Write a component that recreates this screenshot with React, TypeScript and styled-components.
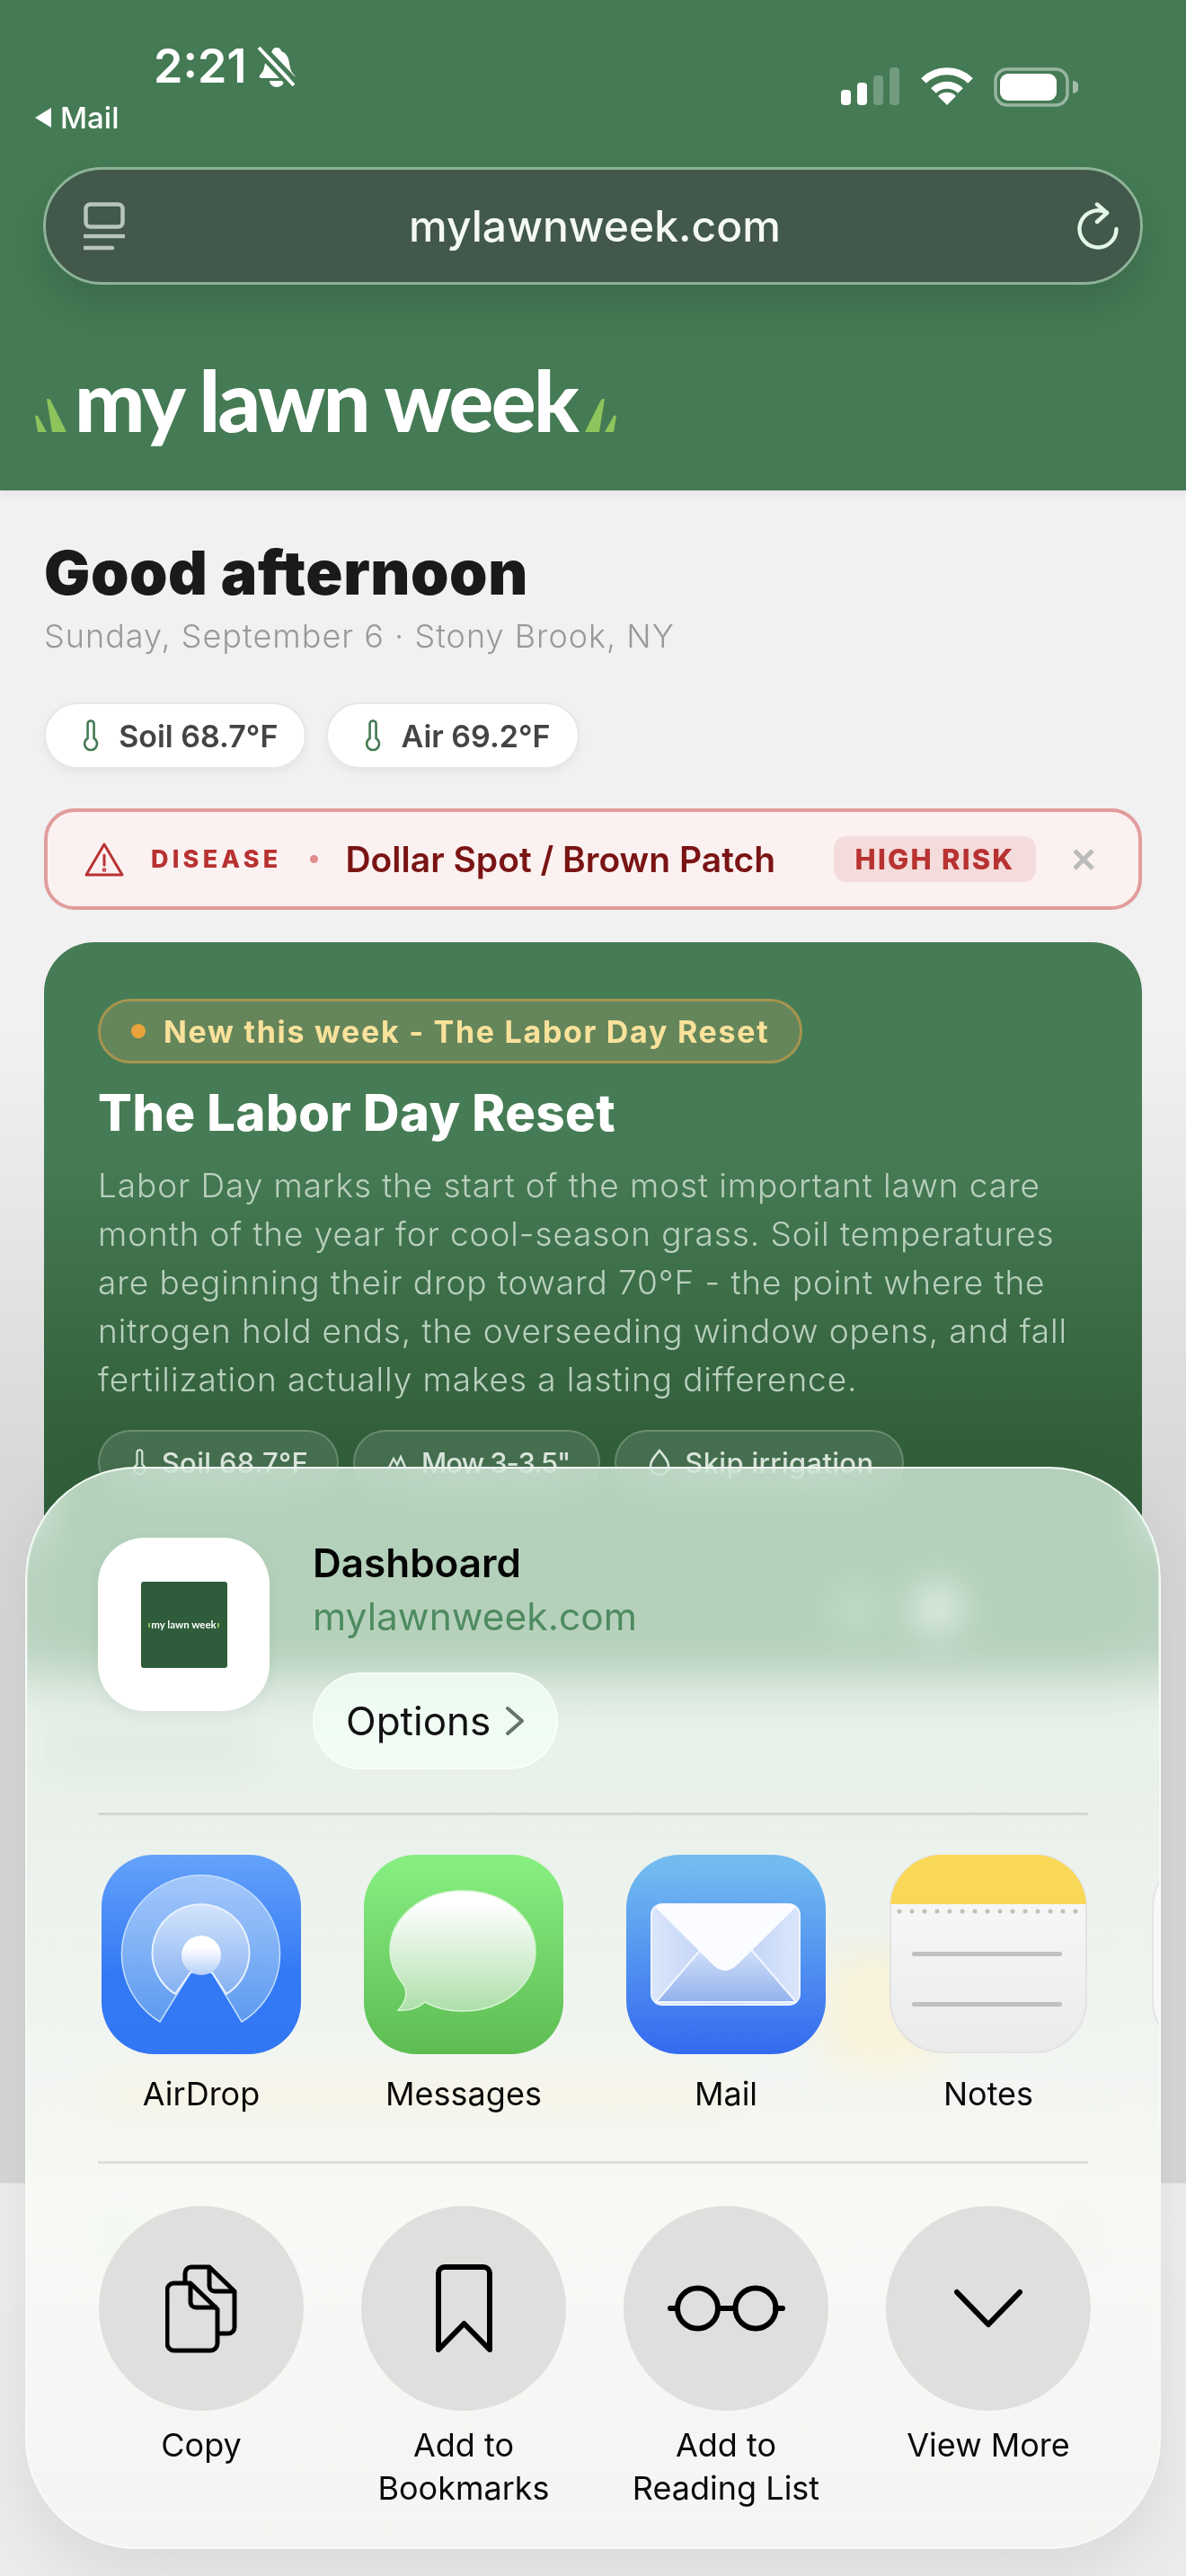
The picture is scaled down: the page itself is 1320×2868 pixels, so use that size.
import React from 'react';
import styled, { createGlobalStyle } from 'styled-components';

const GlobalStyle = createGlobalStyle`
  html, body { margin: 0; padding: 0; background: #e8e8e8; }
  * { box-sizing: border-box; }
`;

const sans = `Inter, "Liberation Sans", sans-serif`;

const apps = ['AirDrop', 'Messages', 'Mail', 'Notes'];

const AirDropIcon = () => (
  <svg width="222" height="222" viewBox="0 0 222 222">
    <defs>
      <linearGradient id="adBg" x1="0" y1="0" x2="0" y2="1">
        <stop offset="0" stopColor="#64a2fa" />
        <stop offset="0.6" stopColor="#3379f5" />
        <stop offset="1" stopColor="#3276f3" />
      </linearGradient>
      <linearGradient id="adOuter" x1="0" y1="0" x2="0" y2="1">
        <stop offset="0" stopColor="#a4c8fb" />
        <stop offset="1" stopColor="#5c9af0" />
      </linearGradient>
      <linearGradient id="adInner" x1="0" y1="0" x2="0" y2="1">
        <stop offset="0" stopColor="#d4e4fb" />
        <stop offset="1" stopColor="#84b0f2" />
      </linearGradient>
      <linearGradient id="adDot" x1="0" y1="0" x2="0" y2="1">
        <stop offset="0.3" stopColor="#ffffff" />
        <stop offset="1" stopColor="#b5cff8" />
      </linearGradient>
    </defs>
    <rect width="222" height="222" rx="58" fill="url(#adBg)" />
    <path d="M65 186 A88 88 0 1 1 156 186 L123 131 L99 131 Z" fill="url(#adOuter)" stroke="#c4defd" strokeWidth="1.5" strokeLinejoin="round" />
    <path d="M82 155 A54 54 0 1 1 139 155 L123 131 L99 131 Z" fill="url(#adInner)" stroke="#e8f2ff" strokeWidth="2" strokeLinejoin="round" />
    <circle cx="111" cy="112" r="22" fill="url(#adDot)" />
  </svg>
);

const MessagesIcon = () => (
  <svg width="222" height="222" viewBox="0 0 222 222">
    <defs>
      <linearGradient id="msgBg" x1="0" y1="0" x2="0" y2="1">
        <stop offset="0" stopColor="#88f082" />
        <stop offset="1" stopColor="#5dbc52" />
      </linearGradient>
      <linearGradient id="msgBubble" x1="0" y1="0" x2="0" y2="1">
        <stop offset="0.1" stopColor="#ffffff" />
        <stop offset="1" stopColor="#aedfaa" />
      </linearGradient>
    </defs>
    <rect width="222" height="222" rx="58" fill="url(#msgBg)" />
    <path
      d="M110 40 C156 40 191 70 191 107 C191 144 156 174 110 174 C94 174 80 171 68 164 C60 171 50 174 38 173 C46 165 49 155 45 146 C36 134 29 122 29 107 C29 70 64 40 110 40 Z"
      fill="url(#msgBubble)"
      stroke="#d6f5d2"
      strokeWidth="1.5"
    />
  </svg>
);

const MailIcon = () => (
  <svg width="222" height="222" viewBox="0 0 222 222">
    <defs>
      <linearGradient id="mailBg" x1="0" y1="0" x2="0" y2="1">
        <stop offset="0.05" stopColor="#72bbf0" />
        <stop offset="1" stopColor="#336af0" />
      </linearGradient>
      <linearGradient id="mailBody" x1="0" y1="0" x2="1" y2="0">
        <stop offset="0" stopColor="#dbe6fb" />
        <stop offset="0.5" stopColor="#b8cdf3" />
        <stop offset="1" stopColor="#dbe6fb" />
      </linearGradient>
      <linearGradient id="mailLower" x1="0" y1="0" x2="0" y2="1">
        <stop offset="0" stopColor="#d4e1f9" />
        <stop offset="1" stopColor="#93b2ec" />
      </linearGradient>
    </defs>
    <rect width="222" height="222" rx="60" fill="url(#mailBg)" />
    <rect x="28" y="55" width="165" height="112" rx="12" fill="url(#mailBody)" stroke="#eef4ff" strokeWidth="2" />
    <path d="M33 164 L85 103 L137 103 L189 164 Z" fill="url(#mailLower)" stroke="#f2f7ff" strokeWidth="2" strokeLinejoin="round" />
    <path d="M32 58 L96 122 Q110 136 124 122 L189 58 Q186 55 180 55 L40 55 Q35 55 32 58 Z" fill="#fbfcff" />
  </svg>
);

const NotesIcon = () => (
  <svg width="220" height="222" viewBox="0 0 220 222">
    <defs>
      <linearGradient id="notesPaper" x1="0" y1="0" x2="0" y2="1">
        <stop offset="0" stopColor="#fafafa" />
        <stop offset="1" stopColor="#ebebeb" />
      </linearGradient>
      <clipPath id="notesClip">
        <rect x="1" y="0" width="218" height="220" rx="58" />
      </clipPath>
    </defs>
    <rect x="1" y="0" width="218" height="220" rx="58" fill="url(#notesPaper)" stroke="#e2e2e2" strokeWidth="2" />
    <rect x="0" y="0" width="220" height="55" fill="#f9d857" clipPath="url(#notesClip)" />
    <g fill="#c4c2b4">
      {Array.from({ length: 15 }).map((_, i) => (
        <circle key={i} cx={11 + i * 14} cy="63" r="2.5" />
      ))}
    </g>
    <rect x="25" y="108" width="167" height="5" rx="2.5" fill="#c0c0c0" />
    <rect x="25" y="164" width="167" height="5" rx="2.5" fill="#c0c0c0" />
  </svg>
);

const appIcons = [<AirDropIcon key="a" />, <MessagesIcon key="m" />, <MailIcon key="e" />, <NotesIcon key="n" />];

const Thermometer = ({ size = 36, color = '#447a54' }: { size?: number; color?: string }) => (
  <svg width={size * 0.56} height={size} viewBox="0 0 20 36" fill="none" stroke={color} strokeWidth="2.6">
    <path d="M6.5 21 V5 a3.5 3.5 0 0 1 7 0 V21 a7 7 0 1 1 -7 0 Z" />
  </svg>
);

const Blades = ({ flip }: { flip?: boolean }) => (
  <svg width="38" height="37" viewBox="0 0 38 37" fill="#8fc45c">
    {flip ? (
      <>
        <path d="M37 19 Q35 18 34 19 L24 37 H34 Z" />
        <path d="M24 0 Q21 0 20 1 L2 37 H18 Z" />
      </>
    ) : (
      <>
        <path d="M1 19 Q3 18 4 19 L14 37 H4 Z" />
        <path d="M14 0 Q17 0 18 1 L36 37 H20 Z" />
      </>
    )}
  </svg>
);

export default function App() {
  return (
    <Screen>
      <GlobalStyle />
      <Header>
        <StatusBar>
          <StatusLeft>
            <TimeRow>
              <Time>2:21</Time>
              <svg width="44" height="46" viewBox="0 0 44 46" fill="#fff">
                <path d="M22 2 c3 0 5 2 5 4 c6 2 8 7 9 13 c1 7 2 10 6 14 c1 1 0 3-2 3 H5 c-2 0-3-2-2-3 c4-4 5-7 6-14 c1-6 4-11 8-13 c0-2 2-4 5-4 Z" />
                <path d="M14 39 h16 a8 7 0 0 1-16 0 Z" />
                <path d="M6 0 L44 40" stroke="#447a54" strokeWidth="5" />
                <path d="M0 4 L40 46" stroke="#447a54" strokeWidth="8" />
                <path d="M2 2 L41 44" stroke="#fff" strokeWidth="4" />
              </svg>
            </TimeRow>
            <BackLink>
              <svg width="20" height="24" viewBox="0 0 20 24" fill="#fff">
                <path d="M19 1 V23 L1 12 Z" />
              </svg>
              Mail
            </BackLink>
          </StatusLeft>
          <StatusRight>
            <svg width="66" height="42" viewBox="0 0 66 42">
              <rect x="0" y="25" width="11" height="17" rx="4" fill="#fff" />
              <rect x="18" y="17" width="11" height="25" rx="4" fill="#fff" />
              <rect x="36" y="9" width="11" height="33" rx="4" fill="#fff" fillOpacity=".25" />
              <rect x="54" y="0" width="11" height="42" rx="4" fill="#fff" fillOpacity=".25" />
            </svg>
            <svg width="58" height="42" viewBox="0 0 58 42" fill="none" stroke="#fff" strokeWidth="8">
              <path d="M3 15 A37 37 0 0 1 55 15" />
              <path d="M14 26 A21 21 0 0 1 44 26" />
              <path d="M29 42 L19 32 A14 14 0 0 1 39 32 Z" fill="#fff" stroke="none" />
            </svg>
            <svg width="94" height="44" viewBox="0 0 94 44">
              <rect x="2" y="2" width="80" height="40" rx="13" fill="none" stroke="#fff" strokeOpacity=".45" strokeWidth="3.5" />
              <rect x="7" y="7" width="63" height="30" rx="9" fill="#fff" />
              <path d="M88 15 a7 7 0 0 1 0 14 Z" fill="#fff" fillOpacity=".5" />
            </svg>
          </StatusRight>
        </StatusBar>
        <UrlBar>
          <svg width="46" height="54" viewBox="0 0 46 54" fill="none" stroke="#b7c5ba" strokeWidth="4.5">
            <rect x="2.5" y="2.5" width="41" height="25" rx="5" />
            <path d="M1 38 H45" strokeLinecap="round" />
            <path d="M1 51 H32" strokeLinecap="round" />
          </svg>
          <UrlText>mylawnweek.com</UrlText>
          <svg width="48" height="54" viewBox="0 0 48 54" fill="none" stroke="#e3f7e8" strokeWidth="4.4" strokeLinecap="round" strokeLinejoin="round">
            <path d="M43.5 30 A20.5 20.5 0 1 1 33 12" />
            <path d="M22 2.5 L33 12 L22 22" />
          </svg>
        </UrlBar>
        <LogoRow>
          <Blades />
          <LogoText>my lawn week</LogoText>
          <Blades flip />
        </LogoRow>
      </Header>

      <SheetBacking />
      <Content>
        <Greeting>Good afternoon</Greeting>
        <DateLine>Sunday, September 6 · Stony Brook, NY</DateLine>
        <ChipRow>
          <Chip>
            <Thermometer />
            Soil 68.7°F
          </Chip>
          <Chip>
            <Thermometer />
            Air 69.2°F
          </Chip>
        </ChipRow>
        <Alert>
          <svg width="44" height="38" viewBox="0 0 44 38" fill="none" stroke="#b83232" strokeWidth="3" strokeLinejoin="round">
            <path d="M22 2 L42 36 H2 Z" />
            <path d="M22 14 V25" strokeLinecap="round" />
            <circle cx="22" cy="30.5" r="0.8" />
          </svg>
          <AlertKind>DISEASE</AlertKind>
          <AlertDot />
          <AlertTitle>Dollar Spot / Brown Patch</AlertTitle>
          <RiskBadge>HIGH RISK</RiskBadge>
          <CloseMark>
            <svg width="24" height="24" viewBox="0 0 24 24" stroke="#bbb" strokeWidth="5">
              <path d="M2 2 L22 22 M22 2 L2 22" />
            </svg>
          </CloseMark>
        </Alert>
        <Card>
          <NewBadge>
            <BadgeDot />
            New this week - The Labor Day Reset
          </NewBadge>
          <CardTitle>The Labor Day Reset</CardTitle>
          <CardText>
            Labor Day marks the start of the most important lawn care
            <br />
            month of the year for cool-season grass. Soil temperatures
            <br />
            are beginning their drop toward 70°F - the point where the
            <br />
            nitrogen hold ends, the overseeding window opens, and fall
            <br />
            fertilization actually makes a lasting difference.
          </CardText>
          <CardChips>
            <CardChip>
              <Thermometer size={30} color="#dce8de" />
              Soil 68.7°F
            </CardChip>
            <CardChip $tight>
              <svg width="22" height="18" viewBox="0 0 22 18" fill="none" stroke="#dce8de" strokeWidth="2.4">
                <path d="M1 17 L7 5 L11 12 L15 3 L21 17" />
              </svg>
              Mow 3-3.5"
            </CardChip>
            <CardChip>
              <svg width="24" height="30" viewBox="0 0 24 30" fill="none" stroke="#dce8de" strokeWidth="2.6">
                <path d="M12 2 C18 9 22 14 22 19 a10 10 0 0 1-20 0 C2 14 6 9 12 2 Z" />
              </svg>
              Skip irrigation
            </CardChip>
          </CardChips>
          <Pager>
            <PagerDot $tone="#7fc08a" />
            <PagerDot $tone="#ffffff" />
          </Pager>
        </Card>
        <BlurredTitle />
        <WarmCard />
        <WarmStripe />
      </Content>

      <BottomBar>
        <GreenSpot />
        <DarkSpot />
      </BottomBar>

      <Sheet>
        <ShareHead>
          <Thumb>
            <ThumbInner>
              <ThumbBlade />
              <ThumbLogo>my lawn week</ThumbLogo>
              <ThumbBlade />
            </ThumbInner>
          </Thumb>
          <ShareInfo>
            <PageTitle>Dashboard</PageTitle>
            <PageUrl>mylawnweek.com</PageUrl>
            <OptionsButton>
              Options
              <svg width="22" height="34" viewBox="0 0 22 34" fill="none" stroke="#66736a" strokeWidth="4" strokeLinecap="round" strokeLinejoin="round">
                <path d="M3 3 L19 17 L3 31" />
              </svg>
            </OptionsButton>
          </ShareInfo>
        </ShareHead>
        <Divider />
        <AppRow>
          {apps.map((name, i) => (
            <AppCell key={name}>
              {appIcons[i]}
              <AppLabel>{name}</AppLabel>
            </AppCell>
          ))}
          <AppCell>
            <NextIcon />
          </AppCell>
        </AppRow>
        <Divider />
        <ActionRow>
          <ActionCell>
            <ActionCircle>
              <svg width="80" height="99" viewBox="0 0 80 99" fill="none" stroke="#000" strokeWidth="5" strokeLinejoin="round">
                <path d="M22 20 V10 a7 7 0 0 1 7-7 H49 L77 30 V70 a7 7 0 0 1-7 7 H60" />
                <path d="M49 3 V24 a6 6 0 0 0 6 6 H77" />
                <path d="M9 21 H28 L58 50 V88 a8 8 0 0 1-8 8 H10 a8 8 0 0 1-8-8 V29 a8 8 0 0 1 7-8 Z" />
                <path d="M28 21 V42 a6 6 0 0 0 6 6 H58" />
              </svg>
            </ActionCircle>
            <ActionLabel>Copy</ActionLabel>
          </ActionCell>
          <ActionCell>
            <ActionCircle>
              <svg width="63" height="98" viewBox="0 0 63 98" fill="none" stroke="#000" strokeWidth="6" strokeLinejoin="round">
                <path d="M3 95 V10 a7 7 0 0 1 7-7 H53 a7 7 0 0 1 7 7 V95 L31.5 66 Z" />
              </svg>
            </ActionCircle>
            <ActionLabel>
              Add to
              <br />
              Bookmarks
            </ActionLabel>
          </ActionCell>
          <ActionCell>
            <ActionCircle>
              <svg width="131" height="52" viewBox="0 0 131 52" fill="none" stroke="#000" strokeWidth="6" strokeLinecap="round">
                <circle cx="33.5" cy="26" r="22.5" />
                <circle cx="98" cy="26" r="22.5" />
                <path d="M56 26 H75 M3 26 H11 M120 26 H128" />
              </svg>
            </ActionCircle>
            <ActionLabel>
              Add to
              <br />
              Reading List
            </ActionLabel>
          </ActionCell>
          <ActionCell>
            <ActionCircle>
              <svg width="76" height="44" viewBox="0 0 76 44" fill="none" stroke="#000" strokeWidth="6" strokeLinecap="round" strokeLinejoin="round">
                <path d="M3 4 L38 40 L73 4" />
              </svg>
            </ActionCircle>
            <ActionLabel>View More</ActionLabel>
          </ActionCell>
        </ActionRow>
      </Sheet>
    </Screen>
  );
}

const Screen = styled.div`
  position: relative;
  width: 1320px;
  height: 2868px;
  overflow: hidden;
  font-family: ${sans};
  background: linear-gradient(#f1f1f1 0, #f1f1f1 1150px, #d8d8d8 1640px, #d8d8d8 100%);
`;

const Header = styled.header`
  height: 546px;
  background: #447a54;
  box-shadow: 0 2px 10px rgba(0, 0, 0, 0.08);
`;

const StatusBar = styled.div`
  display: flex;
  justify-content: space-between;
  height: 186px;
  padding: 46px 120px 0 38px;
  color: #fff;
`;

const StatusLeft = styled.div`
  display: flex;
  flex-direction: column;
`;

const TimeRow = styled.div`
  display: flex;
  align-items: center;
  gap: 12px;
  margin-left: 133px;
`;

const Time = styled.span`
  font-size: 52px;
  line-height: 56px;
  font-weight: 600;
`;

const BackLink = styled.div`
  display: flex;
  align-items: center;
  gap: 9px;
  margin-top: 10px;
  font-size: 33px;
  line-height: 38px;
  font-weight: 500;
`;

const StatusRight = styled.div`
  display: flex;
  align-items: flex-start;
  gap: 23px;
  padding-top: 29px;
`;

const UrlBar = styled.div`
  display: flex;
  align-items: center;
  justify-content: space-between;
  height: 131px;
  margin: 0 48px 0 48px;
  padding: 0 22px 0 42px;
  border-radius: 66px;
  background: #41584a;
  border: 3px solid #8db398;
  box-shadow: 0 22px 44px rgba(0, 0, 0, 0.12);
`;

const UrlText = styled.span`
  margin-right: 14px;
  font-size: 48px;
  font-weight: 500;
  color: #f5f9f6;
`;

const LogoRow = styled.div`
  display: flex;
  align-items: baseline;
  margin: 78px 0 0 38px;
`;

const LogoText = styled.span`
  font-family: Lato, sans-serif;
  font-size: 93px;
  line-height: 100px;
  font-weight: 900;
  color: #fff;
  margin: 0 7px;
  letter-spacing: -2.6px;
`;

const Content = styled.main`
  position: relative;
  padding: 52px 49px 0;
`;

const Greeting = styled.h1`
  margin: 0;
  font-size: 68px;
  line-height: 78px;
  font-weight: 900;
  letter-spacing: 0.6px;
  color: #1a1a1a;
`;

const DateLine = styled.p`
  margin: 10px 0 0;
  font-size: 36px;
  line-height: 44px;
  font-weight: 300;
  letter-spacing: 1px;
  color: #999;
`;

const ChipRow = styled.div`
  display: flex;
  gap: 22px;
  margin-top: 52px;
`;

const Chip = styled.div`
  display: flex;
  align-items: center;
  gap: 21px;
  height: 74px;
  padding: 0 30px 0 40px;
  border-radius: 37px;
  background: #fff;
  border: 2px solid #e6e8e4;
  box-shadow: 0 4px 10px rgba(0, 0, 0, 0.05);
  font-size: 34px;
  font-weight: 600;
  color: #444;
`;

const Alert = styled.div`
  display: flex;
  align-items: center;
  height: 113px;
  margin-top: 44px;
  padding: 0 49px 0 41px;
  border-radius: 34px;
  background: #fcf1f1;
  border: 4px solid #e19c9c;
`;

const AlertKind = styled.span`
  margin-left: 30px;
  font-size: 27px;
  font-weight: 800;
  letter-spacing: 4.2px;
  color: #b83232;
`;

const AlertDot = styled.span`
  width: 9px;
  height: 9px;
  margin-left: 32px;
  border-radius: 50%;
  background: #e08c8c;
`;

const AlertTitle = styled.span`
  margin-left: 30px;
  font-size: 39px;
  font-weight: 600;
  color: #7a1414;
`;

const RiskBadge = styled.span`
  display: flex;
  align-items: center;
  justify-content: center;
  width: 225px;
  height: 51px;
  margin-left: auto;
  border-radius: 14px;
  background: #f5dcdc;
  font-size: 31px;
  font-weight: 800;
  letter-spacing: 2.2px;
  color: #b83232;
`;

const CloseMark = styled.span`
  display: flex;
  margin-left: 41px;
`;

const Card = styled.section`
  height: 806px;
  margin-top: 36px;
  padding: 63px 60px 0;
  border-radius: 56px;
  background: linear-gradient(#467c55 0, #467c55 28%, #32603b 68%, #32603b 100%);
`;

const NewBadge = styled.div`
  display: inline-flex;
  align-items: center;
  gap: 20px;
  height: 72px;
  padding: 0 34px;
  border-radius: 36px;
  background: #65855a;
  border: 3px solid #a59550;
  font-size: 34px;
  font-weight: 700;
  letter-spacing: 1.7px;
  color: #fae29b;
`;

const BadgeDot = styled.span`
  width: 16px;
  height: 16px;
  border-radius: 50%;
  background: #e8a33a;
`;

const CardTitle = styled.h2`
  margin: 21px 0 0;
  font-size: 56px;
  line-height: 68px;
  font-weight: 800;
  letter-spacing: 0.5px;
  color: #fff;
`;

const CardText = styled.p`
  margin: 20px 0 0;
  font-size: 37px;
  line-height: 54px;
  font-weight: 300;
  letter-spacing: 0.9px;
  white-space: nowrap;
  color: #b9d0bd;
`;

const CardChips = styled.div`
  display: flex;
  gap: 16px;
  margin-top: 29px;
`;

const CardChip = styled.div<{ $tight?: boolean }>`
  display: flex;
  align-items: center;
  gap: 16px;
  height: 72px;
  padding: 0 32px 0 36px;
  border-radius: 36px;
  background: rgba(255, 255, 255, 0.1);
  border: 2px solid rgba(255, 255, 255, 0.2);
  font-size: 31px;
  font-weight: 500;
  letter-spacing: ${(p) => (p.$tight ? '-1.1px' : '0.3px')};
  color: #dce8de;
`;

const Pager = styled.div`
  display: flex;
  justify-content: flex-end;
  align-items: center;
  gap: 50px;
  margin: 102px 146px 0 0;
`;

const PagerDot = styled.span<{ $tone: string }>`
  width: ${(p) => (p.$tone === '#ffffff' ? 44 : 36)}px;
  height: ${(p) => (p.$tone === '#ffffff' ? 50 : 40)}px;
  border-radius: 50%;
  background: ${(p) => p.$tone};
`;

const BlurredTitle = styled.div`
  width: 240px;
  height: 30px;
  margin: 76px 0 0 0;
  border-radius: 8px;
  background: #b0b0b0;
`;

const WarmCard = styled.div`
  width: 130px;
  height: 130px;
  margin: 216px 0 0 870px;
  border-radius: 30px;
  background: #f3d38a;
`;

const WarmStripe = styled.div`
  width: 700px;
  height: 24px;
  margin: 14px 0 0 60px;
  border-radius: 8px;
  background: #f5cd86;
`;

const BottomBar = styled.div`
  position: absolute;
  left: 0;
  right: 0;
  bottom: 0;
  height: 438px;
  background: linear-gradient(#f0f0f0, #ebebeb);
  border-top: 1px solid #e2e2e2;
`;

const GreenSpot = styled.span`
  position: absolute;
  left: 115px;
  top: 40px;
  width: 36px;
  height: 36px;
  border-radius: 8px;
  background: #a4cfaf;
`;

const DarkSpot = styled.span`
  position: absolute;
  right: 104px;
  top: 40px;
  width: 32px;
  height: 36px;
  border-radius: 8px;
  background: #a4a4a4;
`;

const SheetBacking = styled.div`
  position: absolute;
  left: 31px;
  right: 31px;
  top: 1636px;
  height: 270px;
  border-radius: 122px 122px 0 0;
  background: linear-gradient(#32603b 0, #32603b 72%, rgba(50, 96, 59, 0) 100%);
`;

const Sheet = styled.aside`
  position: absolute;
  left: 28px;
  top: 1633px;
  width: 1264px;
  height: 1205px;
  overflow: hidden;
  border-radius: 124px;
  border: 2.5px solid #f5fbf6;
  background: linear-gradient(
    rgba(240, 255, 245, 0.7) 0,
    rgba(240, 250, 242, 0.72) 30%,
    rgba(250, 252, 248, 0.85) 65%,
    rgba(245, 245, 243, 0.88) 100%
  );
  backdrop-filter: blur(22px) saturate(1.4);
  box-shadow: 0 20px 70px rgba(0, 0, 0, 0.09);
`;

const ShareHead = styled.div`
  display: flex;
  gap: 48px;
  height: 383px;
  padding: 77px 0 0 79px;
`;

const Thumb = styled.div`
  display: flex;
  align-items: center;
  justify-content: center;
  width: 191px;
  height: 193px;
  border-radius: 52px;
  background: #fff;
  box-shadow: 0 6px 16px rgba(0, 0, 0, 0.05);
`;

const ThumbInner = styled.div`
  display: flex;
  align-items: center;
  justify-content: center;
  gap: 1px;
  width: 96px;
  height: 96px;
  border-radius: 3px;
  background: #2f5c3a;
`;

const ThumbBlade = styled.span`
  width: 2px;
  height: 5px;
  margin-top: 2px;
  background: #8fbf5a;
`;

const ThumbLogo = styled.span`
  font-family: Lato, sans-serif;
  font-size: 11.5px;
  font-weight: 700;
  white-space: nowrap;
  color: #fff;
`;

const ShareInfo = styled.div`
  display: flex;
  flex-direction: column;
  align-items: flex-start;
  padding-top: 2px;
`;

const PageTitle = styled.div`
  font-size: 44px;
  line-height: 52px;
  font-weight: 600;
  color: #050505;
`;

const PageUrl = styled.div`
  margin-top: 8px;
  font-size: 42.5px;
  line-height: 52px;
  color: #4f8b60;
`;

const OptionsButton = styled.div`
  display: flex;
  align-items: center;
  gap: 16px;
  height: 108px;
  margin-top: 36px;
  padding: 0 35px;
  border-radius: 54px;
  background: rgba(240, 253, 245, 0.85);
  border: 2px solid rgba(255, 255, 255, 0.6);
  font-size: 44px;
  color: #111;
`;

const Divider = styled.div`
  height: 3px;
  margin: 0 79px;
  background: rgba(0, 0, 0, 0.1);
`;

const AppRow = styled.div`
  display: grid;
  grid-template-columns: repeat(5, 292px);
  height: 385px;
  padding: 44px 0 0 48px;
`;

const AppCell = styled.div`
  display: flex;
  flex-direction: column;
  align-items: center;
`;

const AppLabel = styled.div`
  margin-top: 22px;
  font-size: 36px;
  line-height: 44px;
  color: #0a0a0a;
`;

const NextIcon = styled.div`
  width: 220px;
  height: 220px;
  border-radius: 58px;
  background: #f8f8f8;
  border: 2px solid #e4e4e4;
`;

const ActionRow = styled.div`
  display: grid;
  grid-template-columns: repeat(4, 292px);
  padding: 47px 0 0 48px;
`;

const ActionCell = styled.div`
  display: flex;
  flex-direction: column;
  align-items: center;
`;

const ActionCircle = styled.div`
  display: flex;
  align-items: center;
  justify-content: center;
  width: 228px;
  height: 228px;
  border-radius: 50%;
  background: #dfe0dd;
`;

const ActionLabel = styled.div`
  margin-top: 14px;
  font-size: 36px;
  line-height: 48px;
  text-align: center;
  color: #0a0a0a;
`;
